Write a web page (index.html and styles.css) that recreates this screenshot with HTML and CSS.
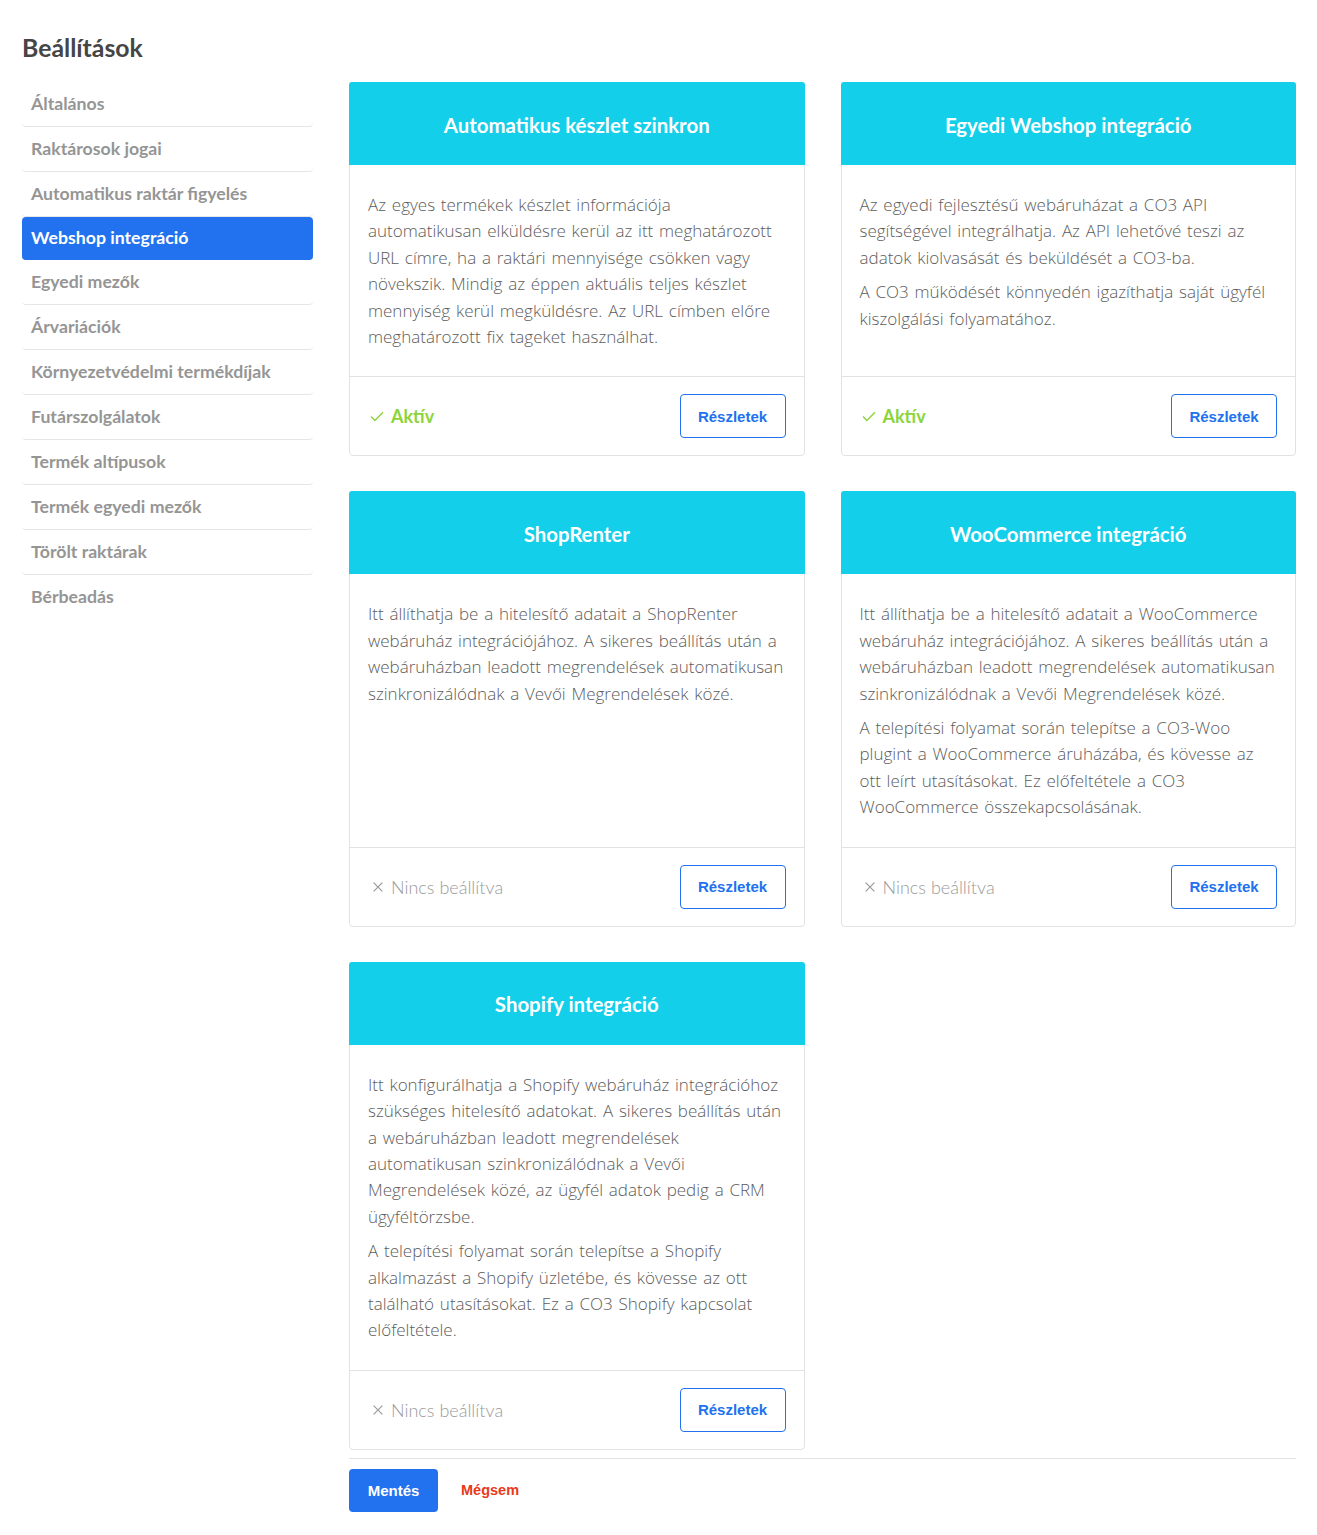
FILE: index.html
```html
<!DOCTYPE html>
<html lang="hu">

<head>
    <meta charset="UTF-8">
    <meta name="viewport" content="width=device-width, initial-scale=1.0">
    <title>Beállítások</title>
    <link rel="stylesheet" href="styles.css">
</head>

<body>
    <div class="page">
        <h1 class="page-title">Beállítások</h1>
        <div class="layout">
            <nav class="side-menu">
                <a class="menu-item" href="#">Általános</a>
                <a class="menu-item" href="#">Raktárosok jogai</a>
                <a class="menu-item" href="#">Automatikus raktár figyelés</a>
                <a class="menu-item active" href="#">Webshop integráció</a>
                <a class="menu-item" href="#">Egyedi mezők</a>
                <a class="menu-item" href="#">Árvariációk</a>
                <a class="menu-item" href="#">Környezetvédelmi termékdíjak</a>
                <a class="menu-item" href="#">Futárszolgálatok</a>
                <a class="menu-item" href="#">Termék altípusok</a>
                <a class="menu-item" href="#">Termék egyedi mezők</a>
                <a class="menu-item" href="#">Törölt raktárak</a>
                <a class="menu-item last" href="#">Bérbeadás</a>
            </nav>

            <main class="content">
                <div class="card-grid">
                    <div class="card">
                        <div class="card-header">Automatikus készlet szinkron</div>
                        <div class="card-body">
                            <p>Az egyes termékek készlet információja automatikusan elküldésre kerül az itt meghatározott URL címre, ha a raktári mennyisége csökken vagy növekszik. Mindig az éppen aktuális teljes készlet mennyiség kerül megküldésre. Az URL címben előre meghatározott fix tageket használhat.</p>
                        </div>
                        <div class="card-footer">
                            <span class="status on">
                                <svg viewBox="0 0 16 16" width="16" height="16"><path d="M2 8.6l3.8 3.8L14 4.2" fill="none" stroke="currentColor" stroke-width="1.4"/></svg>
                                Aktív
                            </span>
                            <button class="btn-outline">Részletek</button>
                        </div>
                    </div>

                    <div class="card">
                        <div class="card-header">Egyedi Webshop integráció</div>
                        <div class="card-body">
                            <p>Az egyedi fejlesztésű webáruházat a CO3 API segítségével integrálhatja. Az API lehetővé teszi az adatok kiolvasását és beküldését a CO3-ba.</p>
                            <p>A CO3 működését könnyedén igazíthatja saját ügyfél kiszolgálási folyamatához.</p>
                        </div>
                        <div class="card-footer">
                            <span class="status on">
                                <svg viewBox="0 0 16 16" width="16" height="16"><path d="M2 8.6l3.8 3.8L14 4.2" fill="none" stroke="currentColor" stroke-width="1.4"/></svg>
                                Aktív
                            </span>
                            <button class="btn-outline">Részletek</button>
                        </div>
                    </div>

                    <div class="card">
                        <div class="card-header">ShopRenter</div>
                        <div class="card-body">
                            <p>Itt állíthatja be a hitelesítő adatait a ShopRenter webáruház integrációjához. A sikeres beállítás után a webáruházban leadott megrendelések automatikusan szinkronizálódnak a Vevői Megrendelések közé.</p>
                        </div>
                        <div class="card-footer">
                            <span class="status off">
                                <svg viewBox="0 0 16 16" width="14" height="14"><path d="M3 3l10 10M13 3L3 13" fill="none" stroke="currentColor" stroke-width="1.4"/></svg>
                                Nincs beállítva
                            </span>
                            <button class="btn-outline">Részletek</button>
                        </div>
                    </div>

                    <div class="card">
                        <div class="card-header">WooCommerce integráció</div>
                        <div class="card-body">
                            <p>Itt állíthatja be a hitelesítő adatait a WooCommerce webáruház integrációjához. A sikeres beállítás után a webáruházban leadott megrendelések automatikusan szinkronizálódnak a Vevői Megrendelések közé.</p>
                            <p>A telepítési folyamat során telepítse a CO3-Woo plugint a WooCommerce áruházába, és kövesse az ott leírt utasításokat. Ez előfeltétele a CO3 WooCommerce összekapcsolásának.</p>
                        </div>
                        <div class="card-footer">
                            <span class="status off">
                                <svg viewBox="0 0 16 16" width="14" height="14"><path d="M3 3l10 10M13 3L3 13" fill="none" stroke="currentColor" stroke-width="1.4"/></svg>
                                Nincs beállítva
                            </span>
                            <button class="btn-outline">Részletek</button>
                        </div>
                    </div>

                    <div class="card">
                        <div class="card-header">Shopify integráció</div>
                        <div class="card-body">
                            <p>Itt konfigurálhatja a Shopify webáruház integrációhoz szükséges hitelesítő adatokat. A sikeres beállítás után a webáruházban leadott megrendelések automatikusan szinkronizálódnak a Vevői Megrendelések közé, az ügyfél adatok pedig a CRM ügyféltörzsbe.</p>
                            <p>A telepítési folyamat során telepítse a Shopify alkalmazást a Shopify üzletébe, és kövesse az ott található utasításokat. Ez a CO3 Shopify kapcsolat előfeltétele.</p>
                        </div>
                        <div class="card-footer">
                            <span class="status off">
                                <svg viewBox="0 0 16 16" width="14" height="14"><path d="M3 3l10 10M13 3L3 13" fill="none" stroke="currentColor" stroke-width="1.4"/></svg>
                                Nincs beállítva
                            </span>
                            <button class="btn-outline">Részletek</button>
                        </div>
                    </div>
                </div>

                <div class="form-actions">
                    <button class="btn-primary">Mentés</button>
                    <a class="btn-link" href="#">Mégsem</a>
                </div>
            </main>
        </div>
    </div>
</body>

</html>
```

FILE: styles.css
```css
body {
    margin: 0;
    padding: 0;
    background: #fff;
    font-family: Lato, 'Open Sans', sans-serif;
    color: #6b6b6b;
}

.page {
    padding: 0 21px 0 22px;
}

.page-title {
    margin: 0 0 19px;
    padding-top: 33px;
    font-size: 24.8px;
    line-height: 30px;
    font-weight: 700;
    color: #454545;
}

.layout {
    display: flex;
    gap: 36px;
    align-items: flex-start;
}

.side-menu {
    width: 291px;
    flex-shrink: 0;
    display: flex;
    flex-direction: column;
}

.menu-item {
    display: block;
    padding: 10px 9px;
    line-height: 24px;
    font-size: 17.7px;
    font-weight: 700;
    color: #959595;
    text-decoration: none;
    border-bottom: 1px solid #e6e6e6;
    border-radius: 0 0 4px 4px;
}

.menu-item.active {
    background: #2271ee;
    color: #fff;
    border-radius: 4px;
    border-bottom-color: #2271ee;
    padding: 9px 9px;
}

.menu-item.last {
    border-bottom: none;
}

.content {
    flex: 1;
    min-width: 0;
}

.card-grid {
    display: grid;
    grid-template-columns: 1fr 1fr;
    column-gap: 36px;
    row-gap: 35px;
}

.card {
    display: flex;
    flex-direction: column;
    border: 1px solid #e2e2e2;
    border-radius: 4px;
    background: #fff;
}

.card-header {
    background: #13cfea;
    color: #fff;
    height: 83px;
    padding-top: 2px;
    box-sizing: border-box;
    display: flex;
    align-items: center;
    justify-content: center;
    font-size: 20.4px;
    font-weight: 700;
    border-radius: 3px 3px 0 0;
    margin: -1px -1px 0;
}

.card-body {
    flex: 1;
    padding: 27px 18px 18px;
}

.card-body p {
    margin: 0 0 8px;
    font-family: 'Open Sans', Lato, sans-serif;
    font-size: 17px;
    word-spacing: 1.35px;
    line-height: 26.4px;
    font-weight: 300;
    color: #5c5c5c;
}

.card-footer {
    border-top: 1px solid #e2e2e2;
    padding: 17px 18px 17px 19px;
    display: flex;
    align-items: center;
    justify-content: space-between;
}

.status {
    display: flex;
    align-items: center;
    gap: 6px;
    font-size: 18px;
}

.status.on {
    color: #8cd43a;
    font-weight: 700;
}

.status.off {
    color: #9a9a9a;
    font-weight: 300;
}

.status.off svg {
    color: #9a9a9a;
    margin-left: 2px;
}

.btn-outline {
    height: 44px;
    width: 106px;
    background: #fff;
    border: 1px solid #2271ee;
    border-radius: 4px;
    color: #2271ee;
    font-family: 'Liberation Sans', Arial, sans-serif;
    font-size: 15px;
    font-weight: 700;
    cursor: pointer;
}

.form-actions {
    margin-top: 8px;
    border-top: 1px solid #e2e2e2;
    padding-top: 10px;
    display: flex;
    align-items: center;
    gap: 23px;
    padding-bottom: 24px;
}

.btn-primary {
    height: 43px;
    width: 89px;
    background: #2271ee;
    border: none;
    border-radius: 4px;
    color: #fff;
    font-family: 'Liberation Sans', Arial, sans-serif;
    font-size: 15px;
    font-weight: 700;
    cursor: pointer;
}

.btn-link {
    color: #e8391a;
    font-family: 'Liberation Sans', Arial, sans-serif;
    font-size: 14.5px;
    font-weight: 700;
    text-decoration: none;
}
```
